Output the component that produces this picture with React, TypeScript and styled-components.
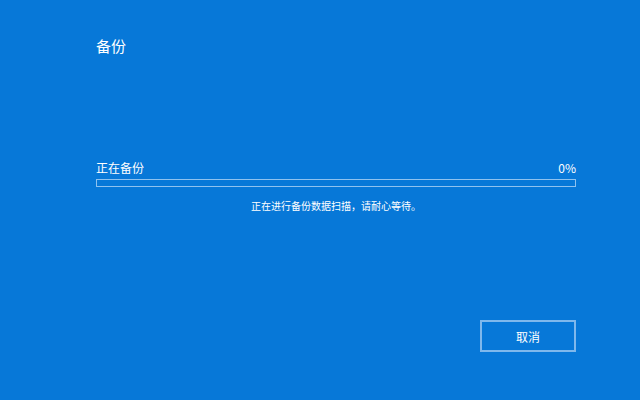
import { createGlobalStyle } from "styled-components";
import styled from "styled-components";

const GlobalStyle = createGlobalStyle`
  html, body {
    margin: 0;
    padding: 0;
    background: #0778d8;
  }
  body {
    font-family: "Noto Sans CJK SC", "Noto Sans", sans-serif;
    color: #ffffff;
  }
`;

const App = () => {
  const percent = 0;
  return (
    <>
      <GlobalStyle />
      <Screen>
        <Title>备份</Title>
        <ProgressSection>
          <ProgressHeader>
            <Label>正在备份</Label>
            <Label>{percent}%</Label>
          </ProgressHeader>
          <Track>
            <Fill style={{ width: `${percent}%` }} />
          </Track>
          <Message>正在进行备份数据扫描，请耐心等待。</Message>
        </ProgressSection>
        <Footer>
          <OutlineButton>取消</OutlineButton>
        </Footer>
      </Screen>
    </>
  );
};

export default App;

const Screen = styled.div`
  width: 640px;
  height: 400px;
  box-sizing: border-box;
  padding: 36px 64px 48px 96px;
  display: flex;
  flex-direction: column;
  background: #0778d8;
`;

const Title = styled.div`
  font-size: 15px;
  line-height: 20px;
  height: 20px;
`;

const ProgressSection = styled.div`
  margin-top: 103px;
  display: flex;
  flex-direction: column;
`;

const ProgressHeader = styled.div`
  display: flex;
  justify-content: space-between;
  align-items: center;
  height: 18px;
`;

const Label = styled.span`
  font-size: 12px;
  line-height: 18px;
`;

const Track = styled.div`
  margin-top: 2px;
  height: 8px;
  box-sizing: border-box;
  border: 1px solid #8fc2ef;
`;

const Fill = styled.div`
  height: 100%;
  background: #ffffff;
`;

const Message = styled.div`
  margin-top: 12px;
  font-size: 10px;
  line-height: 14px;
  text-align: center;
`;

const Footer = styled.div`
  margin-top: auto;
  display: flex;
  justify-content: flex-end;
`;

const OutlineButton = styled.button`
  width: 96px;
  height: 32px;
  box-sizing: border-box;
  border: 2px solid #7fb8ec;
  background: transparent;
  color: #ffffff;
  font-family: "Noto Sans CJK SC", "Noto Sans", sans-serif;
  font-size: 12px;
  padding: 0;
  cursor: pointer;
`;
